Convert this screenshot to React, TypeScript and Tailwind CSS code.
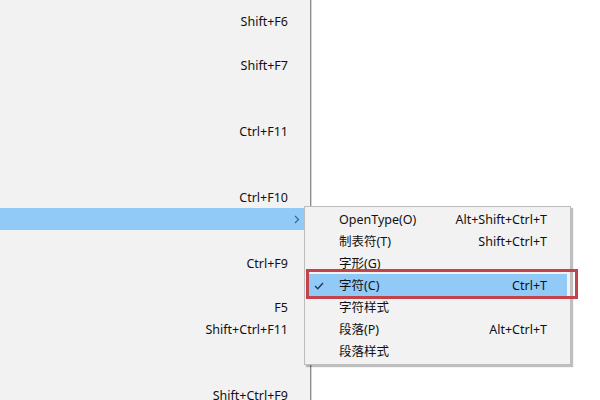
import React from "react";

const font = {
  fontFamily: '"Noto Sans", "Noto Sans CJK SC", sans-serif',
};

const mainRows: { sc?: string; hl?: boolean }[] = [
  { sc: "Shift+F6" },
  {},
  { sc: "Shift+F7" },
  {},
  {},
  { sc: "Ctrl+F11" },
  {},
  {},
  { sc: "Ctrl+F10" },
  { hl: true },
  {},
  { sc: "Ctrl+F9" },
  {},
  { sc: "F5" },
  { sc: "Shift+Ctrl+F11" },
  {},
  {},
  { sc: "Shift+Ctrl+F9" },
];

const subRows: { label: string; sc?: string; checked?: boolean }[] = [
  { label: "OpenType(O)", sc: "Alt+Shift+Ctrl+T" },
  { label: "制表符(T)", sc: "Shift+Ctrl+T" },
  { label: "字形(G)" },
  { label: "字符(C)", sc: "Ctrl+T", checked: true },
  { label: "字符样式" },
  { label: "段落(P)", sc: "Alt+Ctrl+T" },
  { label: "段落样式" },
];

export default function App() {
  return (
    <div
      className="relative w-[600px] h-[400px] overflow-hidden bg-white text-[12.5px] text-[#111]"
      style={font}
    >
      <div className="flex h-full">
        <div className="w-[310px] h-full bg-[#f2f2f2] pt-[10px] flex flex-col">
          {mainRows.map((r, i) => (
            <div
              key={i}
              className={`h-[22px] shrink-0 flex items-center justify-end pr-[22px] pt-[2px] ${
                r.hl ? "bg-[#91c9f7]" : ""
              }`}
            >
              {r.hl ? (
                <svg className="mr-[-12px] mb-[2px]" width="6" height="9" viewBox="0 0 6 9">
                  <path d="M1 1 L4.5 4.5 L1 8" stroke="#3f6487" strokeWidth="1.2" fill="none" />
                </svg>
              ) : (
                <span className="leading-none">{r.sc}</span>
              )}
            </div>
          ))}
        </div>
        <div className="w-[1px] h-full bg-[#8c8c8c]" />
        <div className="w-[1px] h-full bg-[#d4d4d4]" />
        <div className="flex-1 h-full bg-white" />
      </div>

      {/* submenu */}
      <div className="absolute left-[304px] top-[206px] w-[267px] bg-[#f2f2f2] border border-[#bdbdbd] pt-[1px] pb-[2px] shadow-[2px_2px_1px_rgba(0,0,0,0.25)]">
        {subRows.map((r, i) => (
          <div
            key={i}
            className={`relative h-[22px] ml-[1px] mr-[3px] flex items-center pl-[33px] pr-[20px] pt-[2px] ${
              r.checked ? "bg-[#91c9f7]" : ""
            }`}
          >
            {r.checked && (
              <svg
                className="absolute left-[8px] top-[8px]"
                width="10"
                height="8"
                viewBox="0 0 10 8"
              >
                <path d="M1 4 L3.8 6.8 L9 1" stroke="#1f3a5a" strokeWidth="1.4" fill="none" />
              </svg>
            )}
            <span className="leading-none">{r.label}</span>
            <span className="ml-auto leading-none">{r.sc}</span>
          </div>
        ))}
      </div>

      {/* red annotation box */}
      <div className="absolute left-[306px] top-[269px] w-[272px] h-[30px] border-[3px] border-[#c2444a]" />
    </div>
  );
}
